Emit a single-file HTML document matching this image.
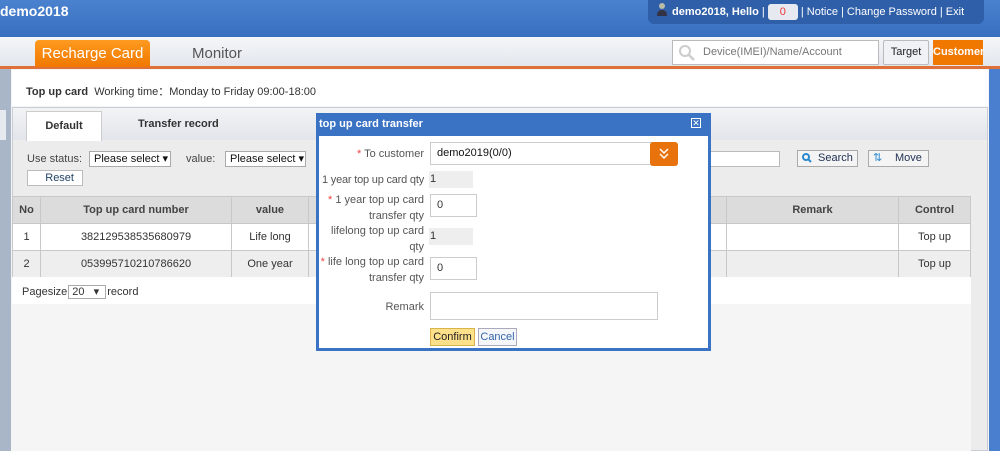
<!DOCTYPE html><html><head><style>
*{box-sizing:border-box;margin:0;padding:0}
body{width:1000px;height:451px;overflow:hidden;position:relative;font-family:"Liberation Sans",Tahoma,sans-serif;font-size:11px;color:#333;background:#f4f4f4}
.a{position:absolute}
td{border:1px solid #c8c8c8;text-align:center}
</style></head><body>
<div class="a" style="left:0;top:0;width:1000px;height:37px;background:linear-gradient(#4a82cf,#3870c0)"></div>
<div class="a" style="left:0;top:3px;font:bold 14px 'Liberation Sans';color:#fff">demo2018</div>
<div class="a" style="left:648px;top:0;width:336px;height:24px;background:#2f5fa8;border-radius:0 0 6px 6px"></div>
<svg class="a" style="left:656px;top:2px" width="12" height="14"><circle cx="6" cy="4" r="3" fill="#bba"/><path d="M1 14 Q1 8 6 8 Q11 8 11 14Z" fill="#334"/></svg>
<div class="a" style="left:672px;top:4px;color:#fff;font-size:11px;white-space:nowrap"><b>demo2018, Hello</b> | <span style="display:inline-block;width:30px;height:16px;background:#e6eaf0;border-radius:3px;color:#e33;text-align:center;line-height:16px;vertical-align:middle">0</span> | Notice | Change Password | Exit</div>
<div class="a" style="left:0;top:37px;width:1000px;height:30px;background:linear-gradient(#f4f6f9,#e2e6ec)"></div>
<div class="a" style="left:0;top:66px;width:1000px;height:3px;background:#e0703a"></div>
<div class="a" style="left:35px;top:40px;width:115px;height:27px;background:linear-gradient(#ff9a20,#f07800);border-radius:4px 4px 0 0;color:#fff;font-size:15px;text-align:center;line-height:27px">Recharge Card</div>
<div class="a" style="left:192px;top:45px;font-size:15px;color:#555">Monitor</div>
<div class="a" style="left:672px;top:40px;width:207px;height:25px;background:#fff;border:1px solid #bbb;color:#777;font-size:11px;line-height:23px;padding-left:30px">Device(IMEI)/Name/Account</div>
<svg class="a" style="left:678px;top:44px" width="18" height="18"><circle cx="7" cy="7" r="5" fill="none" stroke="#ccc" stroke-width="2"/><path d="M11 11 L16 16" stroke="#ccc" stroke-width="2.5"/></svg>
<div class="a" style="left:883px;top:40px;width:46px;height:25px;background:#f0f2f5;border:1px solid #bbb;border-radius:2px;text-align:center;line-height:23px;color:#222">Target</div>
<div class="a" style="left:933px;top:40px;width:50px;height:25px;background:#f07800;color:#fff;text-align:center;line-height:24px;font-weight:bold">Customer</div>
<div class="a" style="left:0;top:69px;width:11px;height:382px;background:#a9b6c8"></div>
<div class="a" style="left:0;top:110px;width:6px;height:30px;background:#e6e9ee"></div>
<div class="a" style="left:989px;top:69px;width:11px;height:382px;background:#4a7fcf"></div>
<div class="a" style="left:12px;top:70px;width:976px;height:36px;background:#fff"></div>
<div class="a" style="left:26px;top:83px;font-size:11px"><b>Top up card</b> &nbsp;Working time：Monday to Friday 09:00-18:00</div>
<div class="a" style="left:12px;top:107px;width:976px;height:344px;background:#ececec;border:1px solid #c9ced6"></div>
<div class="a" style="left:13px;top:108px;width:974px;height:32px;background:linear-gradient(#f2f3f5,#e2e5ea)"></div>
<div class="a" style="left:26px;top:111px;width:76px;height:30px;background:#fff;border:1px solid #ccc;border-bottom:none;text-align:center;line-height:28px;font-weight:bold">Default</div>
<div class="a" style="left:138px;top:118px;font-weight:bold">Transfer record</div>
<div class="a" style="left:27px;top:153px;color:#444">Use status:</div>
<div class="a" style="left:89px;top:151px;width:82px;height:16px;background:#fff;border:1px solid #aaa;line-height:14px;padding-left:4px;color:#111">Please select ▾</div>
<div class="a" style="left:186px;top:153px;color:#444">value:</div>
<div class="a" style="left:225px;top:151px;width:81px;height:16px;background:#fff;border:1px solid #aaa;line-height:14px;padding-left:4px;color:#111">Please select ▾</div>
<div class="a" style="left:27px;top:170px;width:56px;height:16px;background:#fff;border:1px solid #bbb;text-align:right;padding-right:8px;line-height:14px;color:#246">Reset</div>
<div class="a" style="left:700px;top:151px;width:80px;height:16px;background:#fff;border:1px solid #bbb"></div>
<div class="a" style="left:797px;top:150px;width:61px;height:17px;background:#f4f4f4;border:1px solid #aaa;line-height:15px;padding-left:20px;color:#235">Search</div>
<svg class="a" style="left:802px;top:153px" width="10" height="10"><circle cx="4" cy="4" r="3" fill="none" stroke="#2a8ad0" stroke-width="2"/><path d="M6 6 L9 9" stroke="#2a8ad0" stroke-width="2"/></svg>
<div class="a" style="left:868px;top:150px;width:61px;height:17px;background:#f4f4f4;border:1px solid #aaa;line-height:15px;padding-left:26px;color:#235">Move</div>
<div class="a" style="left:873px;top:151px;color:#2a8ad0;font-size:11px">⇅</div>
<table class="a" style="left:12px;top:196px;width:959px;border-collapse:collapse;font-size:11px">
<tr style="height:27px;background:#dcdcdc;font-weight:bold;color:#444"><td style="width:28px">No</td><td style="width:191px">Top up card number</td><td style="width:77px">value</td><td style="width:418px"></td><td style="width:172px">Remark</td><td>Control</td></tr>
<tr style="height:27px;background:#fff"><td>1</td><td>382129538535680979</td><td>Life long</td><td></td><td></td><td>Top up</td></tr>
<tr style="height:27px;background:#eee"><td>2</td><td>053995710210786620</td><td>One year</td><td></td><td></td><td>Top up</td></tr>
</table>
<div class="a" style="left:12px;top:277px;width:959px;height:27px;background:#fff"></div>
<div class="a" style="left:12px;top:304px;width:959px;height:147px;background:#f5f5f5"></div>
<div class="a" style="left:22px;top:285px">Pagesize<span style="display:inline-block;width:38px;height:14px;border:1px solid #aaa;margin:0 1px;padding-left:3px;line-height:12px">20 &nbsp;&nbsp;▾</span>record</div>
<div class="a" style="left:316px;top:113px;width:395px;height:238px;background:#fff;border:3px solid #3a72c4"></div>
<div class="a" style="left:316px;top:113px;width:395px;height:23px;background:#3a72c4;color:#fff;font-weight:bold;line-height:22px;padding-left:3px">top up card transfer</div>
<div class="a" style="left:691px;top:118px;width:10px;height:10px;border:1px solid #fff;color:#fff;font-size:9px;line-height:8px;text-align:center">✕</div>
<div class="a" style="left:316px;top:148px;width:108px;text-align:right;color:#555;white-space:nowrap"><span style="color:#e44">*</span> To customer</div>
<div class="a" style="left:430px;top:142px;width:224px;height:23px;border:1px solid #ccc;padding-left:6px;line-height:21px;color:#111;font-size:11px">demo2019(0/0)</div>
<div class="a" style="left:650px;top:142px;width:28px;height:24px;background:#e8720c;border-radius:3px"></div>
<svg class="a" style="left:658px;top:147px" width="12" height="14"><path d="M2 2 L6 6 L10 2 M2 7 L6 11 L10 7" fill="none" stroke="#fff" stroke-width="1.5"/></svg>
<div class="a" style="left:314px;top:174px;width:110px;text-align:right;color:#555;white-space:nowrap;letter-spacing:-0.2px">1 year top up card qty</div>
<div class="a" style="left:429px;top:171px;width:44px;height:17px;background:#eee;padding-left:1px;line-height:17px">1</div>
<div class="a" style="left:320px;top:192px;width:104px;text-align:right;color:#555;line-height:16px"><span style="color:#e44">*</span> 1 year top up card transfer qty</div>
<div class="a" style="left:430px;top:194px;width:47px;height:23px;border:1px solid #ccc;padding-left:6px;line-height:21px">0</div>
<div class="a" style="left:320px;top:223px;width:104px;text-align:right;color:#555;line-height:16px">lifelong top up card qty</div>
<div class="a" style="left:429px;top:228px;width:44px;height:17px;background:#eee;padding-left:1px;line-height:17px">1</div>
<div class="a" style="left:316px;top:254px;width:108px;text-align:right;color:#555;line-height:16px"><span style="color:#e44">*</span> life long top up card transfer qty</div>
<div class="a" style="left:430px;top:257px;width:47px;height:23px;border:1px solid #ccc;padding-left:6px;line-height:21px">0</div>
<div class="a" style="left:320px;top:301px;width:104px;text-align:right;color:#555">Remark</div>
<div class="a" style="left:430px;top:292px;width:228px;height:28px;border:1px solid #ccc"></div>
<div class="a" style="left:430px;top:328px;width:45px;height:18px;background:#fde08a;border:1px solid #d9b44a;text-align:center;line-height:16px;color:#222">Confirm</div>
<div class="a" style="left:478px;top:328px;width:39px;height:18px;background:#f4f6fa;border:1px solid #aab;text-align:center;line-height:16px;color:#36a">Cancel</div>
</body></html>
